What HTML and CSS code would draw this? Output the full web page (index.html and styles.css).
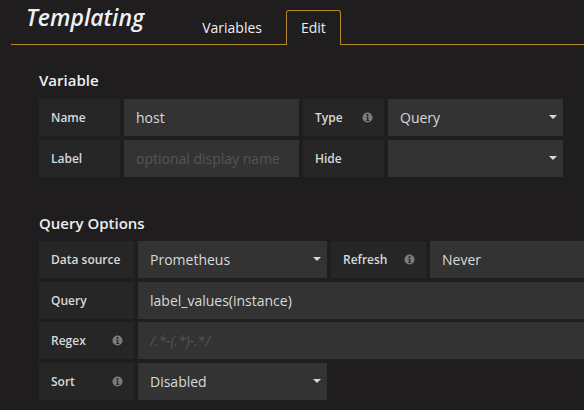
FILE: index.html
```html
<!DOCTYPE html>
<html lang="en">
<head>
    <meta charset="UTF-8">
    <title>Templating</title>
    <link rel="stylesheet" href="styles.css">
</head>
<body>
    <div class="page-header">
        <h1 class="page-title">Templating</h1>
        <div class="tabs">
            <a class="tab">Variables</a>
            <a class="tab active">Edit</a>
        </div>
    </div>

    <div class="editor">
        <h5 class="section-heading">Variable</h5>
        <div class="form-row">
            <label class="form-label w-sm">Name</label>
            <input class="form-input w-md" type="text" value="host">
            <label class="form-label w-sm">Type <svg class="info-icon" viewBox="0 0 12 12"><circle cx="6" cy="6" r="5.5"/><circle class="glyph" cx="6" cy="3.4" r="1.1"/><path class="glyph" d="M4.6 5.2h2.3v3.6h0.9v1h-3.2v-1h0.9v-2.6h-0.9z"/></svg></label>
            <div class="form-select w-md">Query<span class="caret"></span></div>
        </div>
        <div class="form-row">
            <label class="form-label w-sm">Label</label>
            <input class="form-input w-md" type="text" placeholder="optional display name">
            <label class="form-label w-sm">Hide</label>
            <div class="form-select w-md"><span class="caret"></span></div>
        </div>

        <h5 class="section-heading second">Query Options</h5>
        <div class="form-row">
            <label class="form-label w-lg">Data source</label>
            <div class="form-select w-xl">Prometheus<span class="caret"></span></div>
            <label class="form-label w-lg">Refresh <svg class="info-icon" viewBox="0 0 12 12"><circle cx="6" cy="6" r="5.5"/><circle class="glyph" cx="6" cy="3.4" r="1.1"/><path class="glyph" d="M4.6 5.2h2.3v3.6h0.9v1h-3.2v-1h0.9v-2.6h-0.9z"/></svg></label>
            <div class="form-select w-rest">Never</div>
        </div>
        <div class="form-row">
            <label class="form-label w-lg">Query</label>
            <input class="form-input w-full" type="text" value="label_values(instance)">
        </div>
        <div class="form-row">
            <label class="form-label w-lg">Regex <svg class="info-icon" viewBox="0 0 12 12"><circle cx="6" cy="6" r="5.5"/><circle class="glyph" cx="6" cy="3.4" r="1.1"/><path class="glyph" d="M4.6 5.2h2.3v3.6h0.9v1h-3.2v-1h0.9v-2.6h-0.9z"/></svg></label>
            <input class="form-input w-full regex" type="text" placeholder="/.*-(.*)-.*/">
        </div>
        <div class="form-row">
            <label class="form-label w-lg">Sort <svg class="info-icon" viewBox="0 0 12 12"><circle cx="6" cy="6" r="5.5"/><circle class="glyph" cx="6" cy="3.4" r="1.1"/><path class="glyph" d="M4.6 5.2h2.3v3.6h0.9v1h-3.2v-1h0.9v-2.6h-0.9z"/></svg></label>
            <div class="form-select w-xl">Disabled<span class="caret"></span></div>
        </div>
    </div>
</body>
</html>
```

FILE: styles.css
```css
:root {
    --bg-body: #1f1d1e;
    --bg-label: #262626;
    --bg-input: #333333;
    --text: #d8d9da;
    --text-bright: #eceff3;
    --accent: #b5892a;
}

* {
    box-sizing: border-box;
}

body {
    margin: 0;
    width: 584px;
    height: 410px;
    overflow: hidden;
    background-color: var(--bg-body);
    color: var(--text);
    font-family: "Open Sans", "Liberation Sans", sans-serif;
}

/* header + tabs */
.page-header {
    display: flex;
    align-items: flex-end;
    height: 45px;
    margin-left: 11px;
    padding-left: 15px;
    border-bottom: 1px solid var(--accent);
}

.page-title {
    align-self: flex-start;
    margin: 0 43px 0 0;
    font-size: 23px;
    font-style: italic;
    font-weight: 600;
    line-height: 35px;
    color: var(--text-bright);
}

.tabs {
    display: flex;
    gap: 9px;
    margin-bottom: -1px;
}

.tab {
    height: 35px;
    padding: 0 14px;
    border: 1px solid transparent;
    border-bottom: 0;
    border-radius: 3px 3px 0 0;
    font-size: 14px;
    font-weight: 500;
    line-height: 33px;
    color: var(--text-bright);
}

.tab.active {
    border-color: var(--accent);
    background-color: var(--bg-body);
}

/* form */
.editor {
    padding-left: 39px;
    white-space: nowrap;
}

.section-heading {
    margin: 25px 0 9px;
    font-size: 15px;
    font-weight: 600;
    line-height: 20px;
    color: var(--text-bright);
}

.section-heading.second {
    margin: 36.5px 0 8px;
}

.form-row {
    display: flex;
    gap: 4px;
    height: 37px;
    margin-bottom: 3.5px;
}

.form-label {
    display: flex;
    align-items: center;
    justify-content: space-between;
    flex-shrink: 0;
    padding: 0 11px 0 12px;
    background-color: var(--bg-label);
    font-size: 12px;
    font-weight: 600;
    color: var(--text);
}

.form-input,
.form-select {
    flex-shrink: 0;
    height: 37px;
    margin: 0;
    padding: 0 12px;
    border: 0;
    outline: none;
    background-color: var(--bg-input);
    font-family: inherit;
    font-size: 14px;
    color: var(--text);
}

.form-input::placeholder {
    color: #555555;
}

.form-input.regex::placeholder {
    font-style: italic;
}

.form-select {
    position: relative;
    display: flex;
    align-items: center;
}

.caret {
    position: absolute;
    right: 6px;
    top: 16px;
    width: 0;
    height: 0;
    border-left: 4px solid transparent;
    border-right: 4px solid transparent;
    border-top: 4px solid var(--text);
}

.info-icon {
    width: 11px;
    height: 11px;
    fill: #7b7b7b;
}

.info-icon .glyph {
    fill: var(--bg-label);
}

.w-sm { width: 81px; }
.w-md { width: 175px; }
.w-lg { width: 95px; }
.w-xl { width: 189px; }
.w-rest { width: 155px; }
.w-full { width: 446px; }
```
